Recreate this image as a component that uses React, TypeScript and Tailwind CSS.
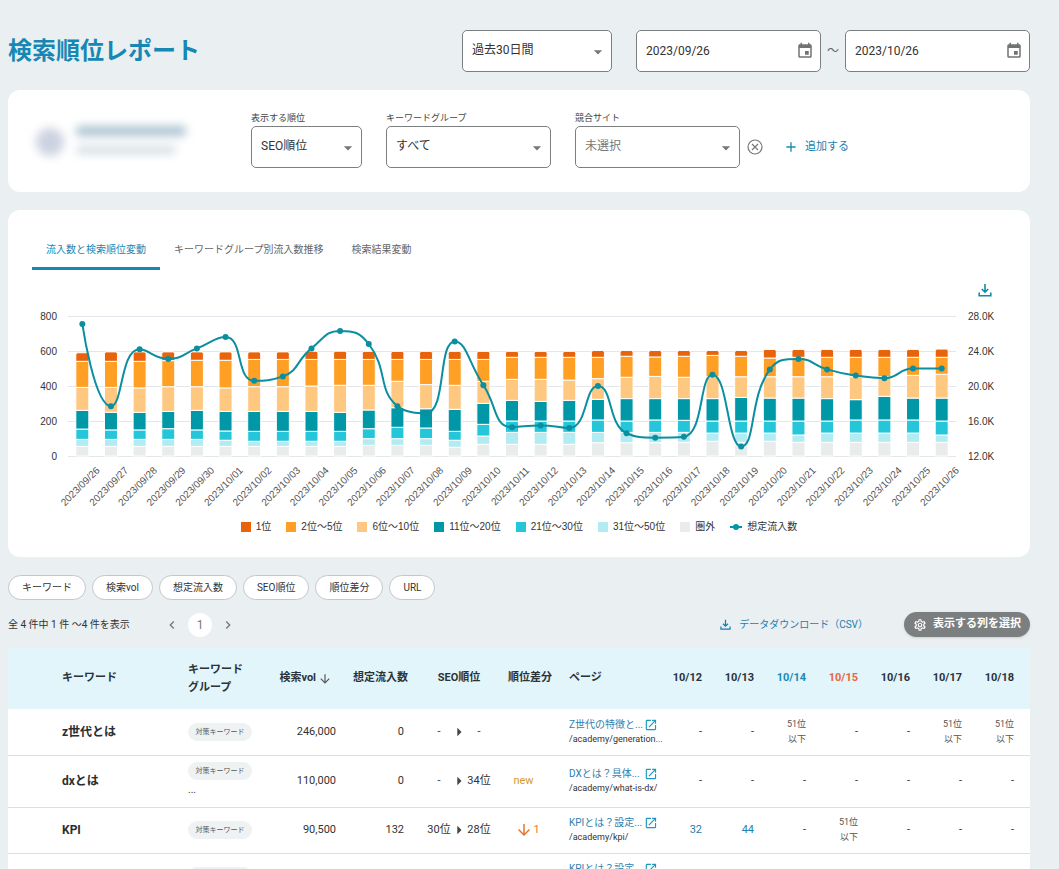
import { useState } from 'react'
import type { ReactNode } from 'react'
import {
  MdAdd,
  MdArrowDownward,
  MdArrowDropDown,
  MdArrowRight,
  MdChevronLeft,
  MdChevronRight,
  MdEvent,
  MdOpenInNew,
  MdOutlineSettings,
} from 'react-icons/md'

const SERIES = [
  { label: '1位', color: '#e8630a' },
  { label: '2位～5位', color: '#ff9f24' },
  { label: '6位～10位', color: '#ffc880' },
  { label: '11位～20位', color: '#0097a7' },
  { label: '21位～30位', color: '#26c6da' },
  { label: '31位～50位', color: '#b2ebf2' },
  { label: '圏外', color: '#e8eceb' },
]

// cumulative keyword counts per day, from 圏外 up to 1位, then the estimated traffic (K)
const DAYS: [string, number[], number][] = [
  ['2023/09/26', [55, 95, 154, 261, 392, 541, 590], 27.1],
  ['2023/09/27', [55, 95, 149, 250, 392, 541, 595], 17.7],
  ['2023/09/28', [55, 95, 149, 250, 389, 541, 595], 24.2],
  ['2023/09/29', [55, 95, 156, 255, 396, 545, 595], 23.1],
  ['2023/09/30', [55, 95, 149, 261, 396, 547, 595], 24.3],
  ['2023/10/01', [55, 90, 143, 255, 389, 547, 595], 25.6],
  ['2023/10/02', [55, 84, 141, 255, 396, 552, 595], 20.6],
  ['2023/10/03', [55, 84, 141, 255, 396, 552, 595], 21.1],
  ['2023/10/04', [55, 84, 141, 255, 400, 552, 599], 24.3],
  ['2023/10/05', [55, 84, 141, 250, 404, 552, 599], 26.3],
  ['2023/10/06', [61, 99, 156, 263, 404, 552, 598], 24.8],
  ['2023/10/07', [61, 99, 164, 276, 427, 552, 598], 17.7],
  ['2023/10/08', [61, 99, 160, 270, 408, 552, 598], 16.9],
  ['2023/10/09', [50, 90, 141, 267, 404, 552, 598], 25.1],
  ['2023/10/10', [67, 114, 181, 301, 427, 552, 598], 20.1],
  ['2023/10/11', [67, 135, 200, 318, 438, 564, 598], 15.3],
  ['2023/10/12', [67, 135, 200, 312, 438, 564, 598], 15.5],
  ['2023/10/13', [67, 135, 200, 318, 434, 564, 598], 15.2],
  ['2023/10/14', [76, 135, 206, 324, 442, 564, 603], 20.0],
  ['2023/10/15', [76, 135, 200, 328, 450, 570, 603], 14.6],
  ['2023/10/16', [76, 135, 206, 328, 455, 566, 603], 14.1],
  ['2023/10/17', [78, 135, 204, 328, 450, 570, 603], 14.2],
  ['2023/10/18', [84, 131, 200, 328, 453, 575, 603], 21.3],
  ['2023/10/19', [78, 131, 200, 335, 453, 570, 603], 13.1],
  ['2023/10/20', [84, 131, 200, 331, 453, 560, 609], 21.9],
  ['2023/10/21', [78, 120, 200, 331, 453, 564, 609], 23.1],
  ['2023/10/22', [78, 131, 200, 328, 453, 564, 609], 21.9],
  ['2023/10/23', [78, 131, 206, 322, 453, 564, 609], 21.2],
  ['2023/10/24', [78, 131, 206, 341, 453, 564, 609], 20.9],
  ['2023/10/25', [78, 131, 206, 331, 461, 564, 609], 22.0],
  ['2023/10/26', [78, 120, 200, 331, 467, 564, 611], 22.0],
]

const BASE = 158
const TOP = 18
const LEFT = 60
const RIGHT = 948
const STEP = (RIGHT - LEFT) / DAYS.length

const xOf = (i: number) => LEFT + STEP * (i + 0.5)
const yCount = (v: number) => BASE - (v / 800) * (BASE - TOP)
const yTraffic = (v: number) => BASE - ((v - 12) / 16) * (BASE - TOP)

type Point = [number, number]

const clampTo = (v: number, a: number, b: number) =>
  Math.max(Math.min(v, Math.max(a, b)), Math.min(a, b))

// smooth curve whose control points never leave the box of their segment
function smoothPath(pts: Point[]) {
  let d = `M${pts[0][0]},${pts[0][1]}`
  let out: Point = pts[0]
  for (let i = 1; i < pts.length; i++) {
    const p = pts[i]
    const prev = pts[i - 1]
    const next = pts[i + 1]
    let cp: Point = p
    let nextOut: Point = p
    if (next) {
      const lenPrev = Math.hypot(p[0] - prev[0], p[1] - prev[1])
      const lenNext = Math.hypot(next[0] - p[0], next[1] - p[1])
      const ratio = lenNext / (lenNext + lenPrev)
      const at = (k: 0 | 1) => {
        let o = clampTo(p[k] + (next[k] - prev[k]) * 0.5 * ratio, p[k], next[k])
        const c = clampTo(p[k] - ((o - p[k]) * lenPrev) / lenNext, prev[k], p[k])
        o = p[k] + ((p[k] - c) * lenNext) / lenPrev
        return [c, o]
      }
      const [cx, ox] = at(0)
      const [cy, oy] = at(1)
      cp = [cx, cy]
      nextOut = [ox, oy]
    }
    d += `C${out[0]},${out[1]} ${cp[0]},${cp[1]} ${p[0]},${p[1]}`
    out = nextOut
  }
  return d
}

function RankChart() {
  const line = DAYS.map(([, , t], i): Point => [xOf(i), yTraffic(t)])
  const colors = SERIES.map((s) => s.color).reverse()

  return (
    <svg
      viewBox="0 0 1022 216"
      className="block w-full font-['Liberation_Sans',sans-serif] text-[10px]"
      role="img"
      aria-label="流入数と検索順位変動"
    >
      {[0, 200, 400, 600, 800].map((v) => (
        <g key={v}>
          <line x1={LEFT} x2={RIGHT} y1={Math.round(yCount(v)) + 0.5} y2={Math.round(yCount(v)) + 0.5} stroke="#e3e6ea" />
          <text x="49" y={yCount(v) + 4} textAnchor="end" fill="#333">
            {v}
          </text>
          <text x="960" y={yCount(v) + 4} fill="#333">
            {(12 + v / 50).toFixed(1)}K
          </text>
        </g>
      ))}
      {DAYS.map(([date, stack], i) => {
        const x = xOf(i) - 6.5
        return (
          <g key={date}>
            {stack.map((v, k) => {
              const y = yCount(v)
              const bottom = k ? yCount(stack[k - 1]) : BASE
              if (k === stack.length - 1) {
                return (
                  <path
                    key={k}
                    d={`M${x},${bottom}V${y + 2}q0,-2 2,-2h9q2,0 2,2V${bottom}z`}
                    fill={colors[k]}
                    stroke="#fff"
                  />
                )
              }
              return <rect key={k} x={x} y={y} width="13" height={bottom - y} fill={colors[k]} stroke="#fff" />
            })}
          </g>
        )
      })}
      <path d={smoothPath(line)} fill="none" stroke="#0b8fa0" strokeWidth="2" />
      {line.map(([x, y], i) => (
        <circle key={i} cx={x} cy={y} r="3" fill="#0b8fa0" />
      ))}
      {DAYS.map(([date], i) => (
        <text
          key={date}
          transform={`translate(${xOf(i) + 18} ${BASE + 15}) rotate(-45)`}
          textAnchor="end"
          fill="#555"
        >
          {date}
        </text>
      ))}
    </svg>
  )
}

function DownloadIcon({ size }: { size: number }) {
  return (
    <svg width={size} height={size} viewBox="0 0 14 14" fill="none" stroke="currentColor" strokeWidth="1.6" aria-hidden="true">
      <path d="M7 1v8M3.8 6 7 9.2 10.2 6M1.2 9.5v3.3h11.6V9.5" />
    </svg>
  )
}

type SelectBoxProps = {
  id: string
  label: string
  options: string[]
  className: string
  showLabel?: boolean
}

function SelectBox({ id, label, options, className, showLabel = true }: SelectBoxProps) {
  return (
    <div className="flex flex-col">
      <label htmlFor={id} className={showLabel ? 'text-[9px] leading-4 text-[#444]' : 'sr-only'}>
        {label}
      </label>
      <div className="relative">
        <select
          id={id}
          className={`h-[42px] appearance-none rounded-[5px] border border-[#7c7f80] bg-white pb-0.5 pl-[9px] pr-7 text-xs ${className}`}
        >
          {options.map((o) => (
            <option key={o}>{o}</option>
          ))}
        </select>
        <MdArrowDropDown className="pointer-events-none absolute right-1 top-3 text-xl text-[#777]" />
      </div>
    </div>
  )
}

function DateBox({ label, value }: { label: string; value: string }) {
  const [date, setDate] = useState(value)
  return (
    <div className="flex h-[42px] w-[185px] items-center rounded-[5px] border border-[#7c7f80] bg-white pl-[9px] pr-1.5">
      <input
        type="text"
        aria-label={label}
        value={date}
        onChange={(e) => setDate(e.target.value)}
        className="min-w-0 flex-1 bg-transparent text-xs text-[#333] outline-none"
      />
      <button type="button" aria-label={`${label}を選択`} className="text-lg text-[#707374]">
        <MdEvent />
      </button>
    </div>
  )
}

const TABS = ['流入数と検索順位変動', 'キーワードグループ別流入数推移', '検索結果変動']
const CHIPS = ['キーワード', '検索vol', '想定流入数', 'SEO順位', '順位差分', 'URL']
const DATES = ['10/12', '10/13', '10/14', '10/15', '10/16', '10/17', '10/18']

type Row = {
  keyword: string
  more?: boolean
  vol: string
  traffic: string
  from: string
  to: string
  diff: ReactNode
  title: string
  url: string
  ranks: string[]
}

const Dropped = () => (
  <span className="flex items-center justify-center pl-2 text-[#e8762d]">
    <MdArrowDownward className="text-lg" />1
  </span>
)

const ROWS: Row[] = [
  {
    keyword: 'z世代とは',
    vol: '246,000',
    traffic: '0',
    from: '-',
    to: '-',
    diff: '',
    title: 'Z世代の特徴と...',
    url: '/academy/generation...',
    ranks: ['-', '-', '51', '-', '-', '51', '51'],
  },
  {
    keyword: 'dxとは',
    more: true,
    vol: '110,000',
    traffic: '0',
    from: '-',
    to: '34位',
    diff: <span className="text-[#d39a2e]">new</span>,
    title: 'DXとは？具体...',
    url: '/academy/what-is-dx/',
    ranks: ['-', '-', '-', '-', '-', '-', '-'],
  },
  {
    keyword: 'KPI',
    vol: '90,500',
    traffic: '132',
    from: '30位',
    to: '28位',
    diff: <Dropped />,
    title: 'KPIとは？設定...',
    url: '/academy/kpi/',
    ranks: ['32', '44', '-', '51', '-', '-', '-'],
  },
  {
    keyword: 'KPIとは',
    vol: '90,500',
    traffic: '0',
    from: '-',
    to: '-',
    diff: '',
    title: 'KPIとは？設定...',
    url: '/academy/kpi/',
    ranks: ['-', '-', '-', '-', '-', '-', '-'],
  },
]

function RankCell({ rank }: { rank: string }) {
  if (rank === '-') return <>-</>
  if (rank === '51') {
    return (
      <span className="block text-[9px] leading-[15px] text-[#555]">
        51位
        <br />
        以下
      </span>
    )
  }
  return <span className="text-[#1a7fae]">{rank}</span>
}

function KeywordTable() {
  return (
    <table className="w-full table-fixed border-collapse bg-white text-[11px] text-[#333]">
      <colgroup>
        <col className="w-[172px]" />
        <col className="w-[92px]" />
        <col className="w-[72px]" />
        <col className="w-[72px]" />
        <col className="w-[86px]" />
        <col className="w-[59px]" />
        <col className="w-[97px]" />
        {DATES.map((d, i) => (
          <col key={d} className={i === DATES.length - 1 ? 'w-[60px]' : 'w-[52px]'} />
        ))}
      </colgroup>
      <thead>
        <tr className="h-[61px] whitespace-nowrap bg-[#e1f5fb] text-left text-[#2b3338] *:font-bold">
          <th className="pl-[54px]">キーワード</th>
          <th className="pl-2 leading-[18px]">
            キーワード
            <br />
            グループ
          </th>
          <th className="pr-3">
            <button type="button" className="flex w-full items-center justify-end gap-0.5 font-bold">
              検索vol
              <MdArrowDownward className="text-sm text-[#555]" />
            </button>
          </th>
          <th className="pr-2 text-right">想定流入数</th>
          <th className="text-center">SEO順位</th>
          <th className="pl-1.5">順位差分</th>
          <th className="pl-2">ページ</th>
          {DATES.map((d) => (
            <th
              key={d}
              className={`pr-2 text-right last:pr-4 ${
                d === '10/14' ? 'text-[#1a8ab5]' : d === '10/15' ? 'text-[#e8663c]' : ''
              }`}
            >
              {d}
            </th>
          ))}
        </tr>
      </thead>
      <tbody>
        {ROWS.map((r) => (
          <tr key={r.keyword} className={`border-b border-[#dcdfe1] ${r.more ? 'h-[52px]' : 'h-[46px]'}`}>
            <td className="whitespace-nowrap pl-[54px] text-xs font-bold text-[#2b2f31]">{r.keyword}</td>
            <td className="pl-2">
              <span className="flex h-[18px] w-16 items-center justify-center whitespace-nowrap rounded-full bg-[#eef2f3] text-[7px] text-[#555]">
                対策キーワード
              </span>
              {r.more && <span className="block text-[10px] leading-5">...</span>}
            </td>
            <td className="pr-2 text-right">{r.vol}</td>
            <td className="pr-3 text-right">{r.traffic}</td>
            <td>
              <span className="flex items-center justify-center whitespace-nowrap">
                <span className="w-8 text-center">{r.from}</span>
                <MdArrowRight className="-mx-1.5 text-xl text-[#444]" />
                <span className="w-8 text-center">{r.to}</span>
              </span>
            </td>
            <td className="pr-4 text-center">{r.diff}</td>
            <td className="whitespace-nowrap pl-2">
              <a href={`#${r.url}`} className="flex items-center text-[10px] leading-[14px] text-[#2e7fb0]">
                <span className="w-[76px]">{r.title}</span>
                <MdOpenInNew className="text-sm text-[#1a9ac0]" />
              </a>
              <span className="block text-[9px] leading-[14px]">{r.url}</span>
            </td>
            {r.ranks.map((rank, i) => (
              <td key={DATES[i]} className="pr-2 text-right last:pr-4">
                <RankCell rank={rank} />
              </td>
            ))}
          </tr>
        ))}
      </tbody>
    </table>
  )
}

export default function App() {
  const [tab, setTab] = useState(0)

  return (
    <main className="h-screen overflow-hidden bg-[#eaeff2] pl-2 pr-[29px] pt-[30px] font-['Roboto','Noto_Sans_CJK_JP',sans-serif] text-[#333]">
      <header className="flex items-center">
        <h1 className="flex-1 whitespace-nowrap text-2xl font-bold text-[#1787b3]">検索順位レポート</h1>
        <SelectBox
          id="period"
          label="期間"
          showLabel={false}
          options={['過去30日間', '過去7日間', '過去90日間']}
          className="w-[150px]"
        />
        <div className="ml-6 flex items-center">
          <DateBox label="開始日" value="2023/09/26" />
          <span className="w-6 text-center text-xs text-[#666]">～</span>
          <DateBox label="終了日" value="2023/10/26" />
        </div>
      </header>

      <section className="mt-[18px] flex items-start gap-6 rounded-xl bg-white px-6 pb-6 pt-5">
        <div className="flex w-[195px] shrink-0 items-center gap-3 pt-4 blur-[5px]" aria-hidden="true">
          <div className="ml-1 size-7 rounded-full bg-[#ccd2e0]" />
          <div className="flex flex-col gap-2.5 pb-1">
            <div className="h-2.5 w-[110px] rounded bg-[#a9c2cf]" />
            <div className="h-2 w-[100px] rounded bg-[#d3dde1]" />
          </div>
        </div>
        <SelectBox id="rank-type" label="表示する順位" options={['SEO順位', 'MEO順位']} className="w-[111px]" />
        <SelectBox id="group" label="キーワードグループ" options={['すべて', '対策キーワード']} className="w-[165px]" />
        <div className="flex items-end">
          <SelectBox id="rival" label="競合サイト" options={['未選択']} className="w-[165px] text-[#777]" />
          <button type="button" aria-label="競合サイトを削除" className="mb-[13px] ml-[7px] text-[#777]">
            <svg width="16" height="16" viewBox="0 0 16 16" fill="none" stroke="currentColor" strokeWidth="1.2">
              <circle cx="8" cy="8" r="7" />
              <path d="M5 5l6 6M11 5l-6 6" />
            </svg>
          </button>
          <button type="button" className="mb-[13px] ml-5 flex items-center gap-1.5 text-[11px] text-[#1a7fae]">
            <MdAdd className="text-base text-[#1a8ab5]" />
            追加する
          </button>
        </div>
      </section>

      <section className="mt-[18px] rounded-xl bg-white pb-[22px] pt-5">
        <div role="tablist" className="flex px-6">
          {TABS.map((t, i) => (
            <button
              key={t}
              type="button"
              role="tab"
              aria-selected={tab === i}
              onClick={() => setTab(i)}
              className={`h-10 border-b-3 px-3.5 pt-0.5 text-[10px] ${
                tab === i ? 'border-[#1389af] text-[#1787b3]' : 'border-transparent text-[#666]'
              }`}
            >
              {t}
            </button>
          ))}
        </div>
        <div className="flex justify-end pr-[38px] pt-3">
          <button type="button" aria-label="グラフをダウンロード" className="flex h-4 items-center text-[#1389af]">
            <DownloadIcon size={14} />
          </button>
        </div>
        <RankChart />
        <ul className="flex justify-center gap-[15px] pt-[5px] font-['Liberation_Sans','Noto_Sans_CJK_JP',sans-serif] text-[10px] leading-4">
          {SERIES.map((s) => (
            <li key={s.label} className="flex items-center gap-[5px]">
              <span className="size-2.5" style={{ background: s.color }} />
              {s.label}
            </li>
          ))}
          <li className="flex items-center gap-[5px]">
            <svg width="12" height="8" viewBox="0 0 12 8" fill="#0097a7" aria-hidden="true">
              <path d="M0 3h12v2H0z" />
              <circle cx="6" cy="4" r="3" />
            </svg>
            想定流入数
          </li>
        </ul>
      </section>

      <div className="mt-[18px] flex gap-1.5">
        {CHIPS.map((c) => (
          <button key={c} type="button" className="h-[25px] rounded-full border border-[#c3c7c9] bg-white px-[13px] text-[10px]">
            {c}
          </button>
        ))}
      </div>

      <div className="mt-3 flex items-center">
        <p className="w-[154px] whitespace-nowrap text-[10px]">全 4 件中 1 件 ～4 件を表示</p>
        <nav aria-label="ページ送り" className="flex items-center gap-2 pl-0.5 text-[#777]">
          <button type="button" aria-label="前のページ" className="text-base">
            <MdChevronLeft />
          </button>
          <button type="button" aria-current="page" className="size-6 rounded-full bg-white text-xs">
            1
          </button>
          <button type="button" aria-label="次のページ" className="text-base">
            <MdChevronRight />
          </button>
        </nav>
        <button type="button" className="ml-auto flex items-center gap-2 text-[10px] text-[#1a7fae]">
          <DownloadIcon size={11} />
          データダウンロード（CSV）
        </button>
        <button
          type="button"
          className="ml-9 flex h-[25px] items-center gap-1.5 rounded-full bg-[#7c7f80] px-[9px] text-[11px] font-bold text-white shadow"
        >
          <MdOutlineSettings className="text-sm" />
          表示する列を選択
        </button>
      </div>

      <div className="mt-[11px]">
        <KeywordTable />
      </div>
    </main>
  )
}
